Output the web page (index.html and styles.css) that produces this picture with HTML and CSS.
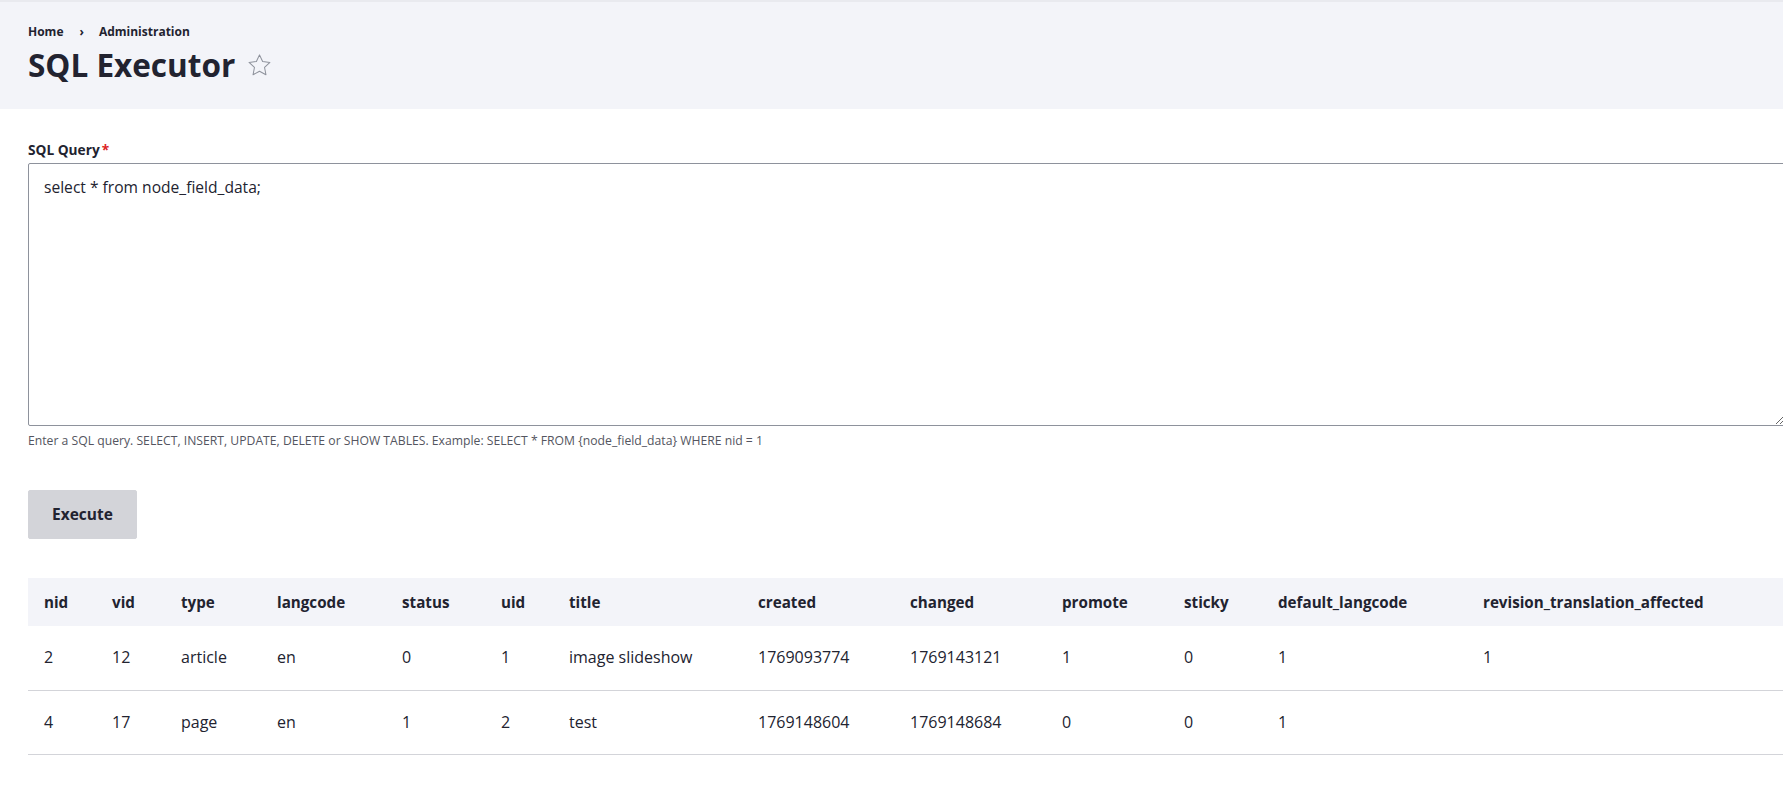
FILE: index.html
```html
<!DOCTYPE html>
<html lang="en">

<head>
	<meta charset="UTF-8">
	<meta name="viewport" content="width=device-width, initial-scale=1.0">
	<title>SQL Executor</title>
	<link rel="stylesheet" href="styles.css">
</head>

<body>
	<header class="page-header">
		<ol class="breadcrumb">
			<li><a href="#">Home</a></li>
			<li><a href="#">Administration</a></li>
		</ol>
		<div class="title-row">
			<h1 class="page-title">SQL Executor</h1>
			<button class="shortcut" title="Add to Default shortcuts">
				<svg width="25" height="25" viewBox="0 0 24 24"><path d="M12 1.8l3 6.4 7 .85-5.15 4.85 1.35 7L12 17.5l-6.2 3.4 1.35-7L2 9.05l7-.85z" fill="none" stroke="#8e929c" stroke-width="1" stroke-linejoin="round"/></svg>
			</button>
		</div>
	</header>

	<main class="page-content">
		<form class="sql-form" onsubmit="return false;">
			<div class="form-item">
				<label for="sql-query" class="form-required">SQL Query</label>
				<textarea id="sql-query" rows="10">select * from node_field_data;</textarea>
				<div class="description">Enter a SQL query. SELECT, INSERT, UPDATE, DELETE or SHOW TABLES. Example: SELECT * FROM {node_field_data} WHERE nid = 1</div>
			</div>
			<button type="submit" class="button">Execute</button>
		</form>

		<table class="results">
			<colgroup>
				<col style="width: 68px">
				<col style="width: 69px">
				<col style="width: 96px">
				<col style="width: 125px">
				<col style="width: 99px">
				<col style="width: 68px">
				<col style="width: 189px">
				<col style="width: 152px">
				<col style="width: 152px">
				<col style="width: 122px">
				<col style="width: 94px">
				<col style="width: 205px">
				<col>
			</colgroup>
			<thead>
				<tr>
					<th>nid</th>
					<th>vid</th>
					<th>type</th>
					<th>langcode</th>
					<th>status</th>
					<th>uid</th>
					<th>title</th>
					<th>created</th>
					<th>changed</th>
					<th>promote</th>
					<th>sticky</th>
					<th>default_langcode</th>
					<th>revision_translation_affected</th>
				</tr>
			</thead>
			<tbody>
				<tr>
					<td>2</td>
					<td>12</td>
					<td>article</td>
					<td>en</td>
					<td>0</td>
					<td>1</td>
					<td>image slideshow</td>
					<td>1769093774</td>
					<td>1769143121</td>
					<td>1</td>
					<td>0</td>
					<td>1</td>
					<td>1</td>
				</tr>
				<tr>
					<td>4</td>
					<td>17</td>
					<td>page</td>
					<td>en</td>
					<td>1</td>
					<td>2</td>
					<td>test</td>
					<td>1769148604</td>
					<td>1769148684</td>
					<td>0</td>
					<td>0</td>
					<td>1</td>
					<td></td>
				</tr>
			</tbody>
		</table>
	</main>
</body>

</html>
```

FILE: styles.css
```css
	html,
	body {
		overflow: hidden;
	}

	body {
		margin: 0;
		font-family: "Open Sans", "Noto Sans", sans-serif;
		color: #222330;
		background-color: #fff;
	}

	.page-header {
		background-color: #f3f4f9;
		border-top: 2px solid #e9eaef;
		padding: 21px 28px 24px;
	}

	.breadcrumb {
		list-style: none;
		margin: 0;
		padding: 0;
		display: flex;
		font-size: 12px;
		font-weight: bold;
		line-height: 18px;
	}

	.breadcrumb a {
		color: #222330;
		text-decoration: none;
	}

	.breadcrumb li + li::before {
		content: "\203A";
		display: inline-block;
		padding: 0 15px 0 16px;
	}

	.title-row {
		display: flex;
		align-items: center;
		gap: 12px;
		margin-top: 4px;
	}

	.page-title {
		margin: 0;
		font-size: 31.5px;
		line-height: 40px;
		font-weight: bold;
	}

	.shortcut {
		background: none;
		border: none;
		padding: 0;
		display: flex;
		cursor: pointer;
	}

	.page-content {
		width: 1757px;
		padding: 32px 0 0 28px;
	}

	.form-item {
		margin-bottom: 40px;
	}

	label {
		display: block;
		font-size: 13.7px;
		font-weight: bold;
		line-height: 18px;
		margin-bottom: 4px;
	}

	.form-required::after {
		content: "*";
		color: #dc2323;
		margin-left: 2px;
	}

	textarea {
		display: block;
		box-sizing: border-box;
		width: 100%;
		height: 263px;
		padding: 11px 15px;
		border: 1px solid #8e929c;
		border-radius: 2px;
		font-family: inherit;
		font-size: 15.6px;
		line-height: 24px;
		color: #222330;
		resize: vertical;
	}

	.description {
		margin-top: 6px;
		font-size: 12.2px;
		line-height: 18px;
		color: #545560;
	}

	.button {
		font-family: inherit;
		font-size: 15.5px;
		font-weight: bold;
		line-height: 16px;
		color: #222330;
		background-color: #d3d4d9;
		border: 1px solid #d3d4d9;
		border-radius: 2px;
		padding: 15px 23px 16px;
		cursor: pointer;
	}

	.button:hover {
		background-color: #c2c3ca;
	}

	.results {
		width: 100%;
		margin-top: 39px;
		border-collapse: collapse;
		table-layout: fixed;
	}

	.results th {
		background-color: #f3f4f9;
		text-align: left;
		font-size: 15.2px;
		font-weight: bold;
		line-height: 24px;
		padding: 12px 16px;
		white-space: nowrap;
	}

	.results td {
		font-size: 16px;
		line-height: 23.5px;
		padding: 20px 16px;
		border-bottom: 1px solid #d3d4d9;
	}
```
